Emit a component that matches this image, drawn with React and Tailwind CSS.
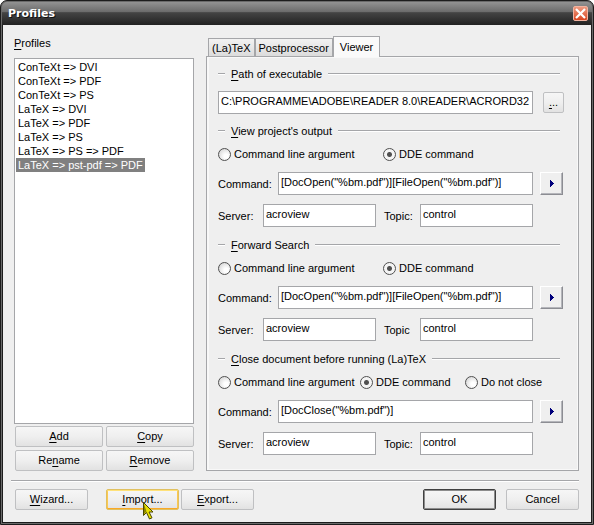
import React, { useState } from 'react';
import clsx from 'clsx';

const PROFILES = [
  'ConTeXt => DVI',
  'ConTeXt => PDF',
  'ConTeXt => PS',
  'LaTeX => DVI',
  'LaTeX => PDF',
  'LaTeX => PS',
  'LaTeX => PS => PDF',
  'LaTeX => pst-pdf => PDF',
];

const TABS = ['(La)TeX', 'Postprocessor', 'Viewer'];

// "&" marks the letter that gets the access key underline
function Mnemonic({ text }) {
  const i = text.indexOf('&');
  if (i < 0) return <>{text}</>;
  return (
    <span>
      {text.slice(0, i)}
      <span className="underline underline-offset-2">{text[i + 1]}</span>
      {text.slice(i + 2)}
    </span>
  );
}

function Button({ label, className, children }) {
  return (
    <button
      type="button"
      className={clsx(
        'relative h-[21px] rounded-[2px] border bg-linear-to-b from-[#f6f6f6] via-[#efefef] to-[#e2e2e2] text-center leading-[19px]',
        className
      )}
    >
      <Mnemonic text={label} />
      {children}
    </button>
  );
}

function TextInput({ className, ...props }) {
  return (
    <input
      type="text"
      className={clsx('h-[23px] min-w-0 border border-[#a5a6a9] bg-white px-[2px] pb-[3px] outline-none', className)}
      {...props}
    />
  );
}

function GroupHeader({ label }) {
  return (
    <div className="flex h-4 items-center pr-[8px]">
      <div className="h-[2px] w-[7px] border-t border-[#a5a6a9] bg-white" />
      <h2 className="px-[6px] leading-4"><Mnemonic text={label} /></h2>
      <div className="h-[2px] flex-1 border-t border-[#a5a6a9] bg-white" />
    </div>
  );
}

function Radio({ name, label, checked, onChange, className }) {
  return (
    <label className={clsx('flex shrink-0 items-center gap-[3px] whitespace-nowrap', className)}>
      <input
        type="radio"
        name={name}
        checked={checked}
        onChange={onChange}
        className="h-[13px] w-[13px] shrink-0 appearance-none rounded-full border border-[#505050] bg-[radial-gradient(circle_at_65%_65%,#ffffff_20%,#dcdcdc_75%)] checked:bg-[radial-gradient(circle,#505050_0_2px,#f4f4f4_3px)]"
      />
      {label}
    </label>
  );
}

function CommandGroup({ id, title, command, options, topicLabel, wide }) {
  const [mode, setMode] = useState('DDE command');

  return (
    <section>
      <GroupHeader label={title} />
      <div className="mt-[7px] flex h-4 items-center">
        {options.map((o, i) => (
          <Radio
            key={o}
            name={id}
            label={o}
            checked={mode === o}
            onChange={() => setMode(o)}
            className={clsx(i === 0 && (wide ? 'w-[165px]' : 'w-[142px]'), i === 1 && 'w-[105px]')}
          />
        ))}
      </div>
      <div className="mt-[10px] flex items-center">
        <label htmlFor={`${id}-command`} className="w-[60px]">Command:</label>
        <TextInput id={`${id}-command`} defaultValue={command} className="flex-1" />
        <button
          type="button"
          aria-label="Insert placeholder"
          className="ml-[7px] mr-[5px] flex h-[23px] w-[23px] items-center justify-center border border-t-white border-l-white border-r-[#8c8d93] border-b-[#8c8d93] bg-[#efefef] shadow-[inset_-1px_-1px_0_#b4b5ba]"
        >
          <svg width="4" height="7" viewBox="0 0 4 7" shapeRendering="crispEdges">
            <path d="M0 0h1v1h1v1h1v1h1v1h-1v1h-1v1h-1v1h-1z" fill="#00007b" />
          </svg>
        </button>
      </div>
      <div className="mt-[9px] flex items-center pr-[35px]">
        <label htmlFor={`${id}-server`} className="w-[45px]">Server:</label>
        <TextInput id={`${id}-server`} defaultValue="acroview" className="flex-1" />
        <label htmlFor={`${id}-topic`} className="ml-2 w-[36px]">{topicLabel}</label>
        <TextInput id={`${id}-topic`} defaultValue="control" className="flex-1" />
      </div>
    </section>
  );
}

function Cursor() {
  return (
    <svg className="absolute left-[36px] top-[12px]" width="12" height="18" viewBox="0 0 12 18">
      <path d="M.5.5v13l3-3 3 6.500 2.500-1.200-3-5.800h4z" fill="#e8e000" stroke="#4a4600" />
      <path d="M1 2v10l2.500-2.500z" fill="#8a8600" />
    </svg>
  );
}

export default function App() {
  const [selected, setSelected] = useState(7);
  const [tab, setTab] = useState('Viewer');

  return (
    <div className="flex min-h-screen flex-col overflow-hidden rounded-t-[7px] border border-[#1c1c1c] bg-[#6a6a6a] p-px font-['Liberation_Sans',sans-serif] text-[11px] leading-[14px] text-black">
      {/* Title bar */}
      <header className="flex h-[23px] items-center justify-between rounded-t-[5px] bg-[linear-gradient(#929292,#6a6a6a_44%,#444_46%,#222)] pl-[6px] pr-1">
        <h1 className="pt-px font-['DejaVu_Sans',sans-serif] text-[11px] font-bold text-white [text-shadow:1px_1px_0_#111]">Profiles</h1>
        <button
          type="button"
          aria-label="Close"
          className="flex h-[15px] w-[15px] items-center justify-center rounded-[2px] border border-[#f3b3a0] bg-linear-to-b from-[#ec9a80] to-[#d8431c]"
        >
          <svg width="11" height="11" viewBox="0 0 11 11" className="shrink-0">
            <path d="M1 1l9 9M10 1l-9 9" stroke="#fff" strokeWidth="2.200" />
          </svg>
        </button>
      </header>

      <main className="flex flex-1 flex-col border border-t-0 border-[#1c1c1c] bg-[#efefef] pl-[11px] pr-3 pt-[11px] pb-3">
        <div className="flex flex-1 gap-3">
          {/* Profile list */}
          <div className="flex w-[180px] shrink-0 flex-col">
            <div id="profiles-label" className="h-[22px]"><Mnemonic text="&Profiles" /></div>
            <ul
              role="listbox"
              aria-labelledby="profiles-label"
              className="flex-1 border border-[#a5a6a9] bg-white px-px pt-px"
            >
              {PROFILES.map((p, i) => (
                <li
                  key={p}
                  role="option"
                  aria-selected={i === selected}
                  onClick={() => setSelected(i)}
                  className={clsx('w-fit px-[2px]', i === selected && 'bg-[#808080] text-white')}
                >
                  {p}
                </li>
              ))}
            </ul>
            <div className="mt-[2px] grid grid-cols-2 gap-[3px] pl-px">
              <Button label="&Add" className="border-[#bfc0c2]" />
              <Button label="&Copy" className="border-[#bfc0c2]" />
              <Button label="Re&name" className="border-[#bfc0c2]" />
              <Button label="&Remove" className="border-[#bfc0c2]" />
            </div>
          </div>

          {/* Tabs */}
          <div className="flex min-w-0 flex-1 flex-col">
            <div role="tablist" className="flex h-5 items-end pl-[2px]">
              {TABS.map(t => (
                <button
                  key={t}
                  type="button"
                  role="tab"
                  aria-selected={t === tab}
                  onClick={() => setTab(t)}
                  className={clsx(
                    'border border-b-0 border-[#a5a6a9]',
                    t === tab
                      ? 'relative z-10 -mb-px h-[21px] bg-[#fafafa] px-[6px]'
                      : 'h-[18px] bg-linear-to-b from-[#f2f2f2] to-[#dcdcdc] px-[3px]'
                  )}
                >
                  {t}
                </button>
              ))}
            </div>
            <div
              role="tabpanel"
              className="flex-1 border border-[#a5a6a9] pt-[9px] pr-[10px] pb-[14px] pl-[11px] shadow-[inset_2px_1px_0_#f8f8f8,inset_-1px_-1px_0_#f8f8f8]"
            >
              <GroupHeader label="&Path of executable" />
              <div className="mt-[9px] mb-[9px] flex items-center">
                <TextInput
                  aria-label="Path of executable"
                  defaultValue="C:\PROGRAMME\ADOBE\READER 8.0\READER\ACRORD32"
                  className="flex-1"
                />
                <Button label="&..." className="ml-[10px] mr-1 w-[21px] border-[#bfc0c2]" />
              </div>
              <div className="flex flex-col gap-[10px]">
                <CommandGroup
                  id="view"
                  title="&View project's output"
                  command={'[DocOpen("%bm.pdf")][FileOpen("%bm.pdf")]'}
                  options={['Command line argument', 'DDE command']}
                  topicLabel="Topic:"
                  wide
                />
                <CommandGroup
                  id="search"
                  title="&Forward Search"
                  command={'[DocOpen("%bm.pdf")][FileOpen("%bm.pdf")]'}
                  options={['Command line argument', 'DDE command']}
                  topicLabel="Topic"
                  wide
                />
                <CommandGroup
                  id="close"
                  title="&Close document before running (La)TeX"
                  command={'[DocClose("%bm.pdf")]'}
                  options={['Command line argument', 'DDE command', 'Do not close']}
                  topicLabel="Topic:"
                />
              </div>
            </div>
          </div>
        </div>

        {/* Footer */}
        <div className="mt-[9px] -ml-[3px] h-[2px] border-t border-[#a5a6a9] bg-white" />
        <footer className="mt-[7px] flex pl-px">
          <Button label="&Wizard..." className="mr-[18px] w-[73px] border-[#bfc0c2]" />
          <Button
            label="&Import..."
            className="mr-[2px] w-[73px] border-[#e0c060] shadow-[inset_0_1px_0_#ffe27a,inset_0_-1px_0_#f9a825,inset_1px_0_0_#fcc850,inset_-1px_0_0_#fcc850]"
          >
            <Cursor />
          </Button>
          <Button label="&Export..." className="w-[73px] border-[#bfc0c2]" />
          <Button label="OK" className="ml-auto mr-[10px] w-[73px] border-[#404040] shadow-[inset_0_0_0_1px_#8c8c8c]" />
          <Button label="Cancel" className="w-[73px] border-[#bfc0c2]" />
        </footer>
      </main>
    </div>
  );
}
